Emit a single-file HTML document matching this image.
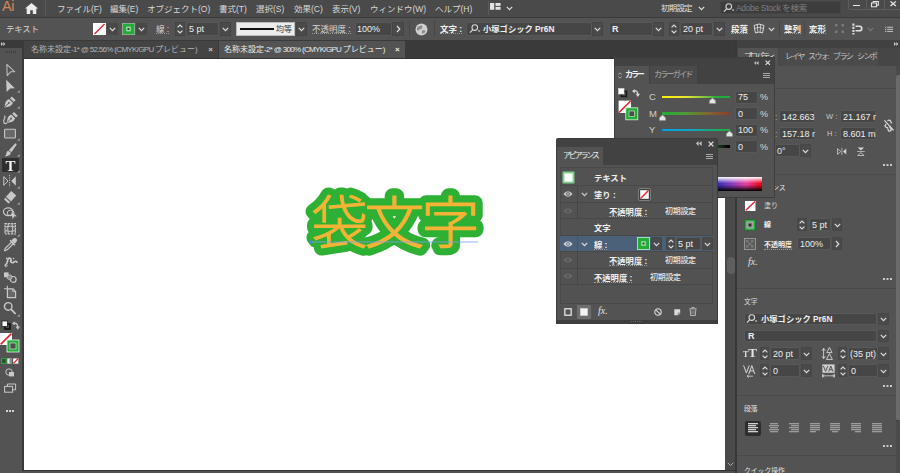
<!DOCTYPE html>
<html lang="ja">
<head>
<meta charset="utf-8">
<title>袋文字 - Illustrator</title>
<style>
*{box-sizing:border-box;margin:0;padding:0}
html,body{width:900px;height:473px;overflow:hidden;background:#3a3a3a}
body{position:relative;font-family:"Liberation Sans","Noto Sans CJK JP",sans-serif;font-size:8.5px;color:#d8d8d8;line-height:1}
.a{position:absolute}
.t{position:absolute;white-space:nowrap;line-height:10px;height:10px}
.b{font-weight:bold;color:#f0f0f0}
.lt{letter-spacing:-.68px}
.u{border-bottom:1px dotted #9a9a9a}
.fld{position:absolute;background:#464646;border:1px solid #585858;border-radius:2px}
.sep{position:absolute;width:1px;background:#444}
svg{position:absolute;overflow:visible}
.chev{fill:none;stroke:#dcdcdc;stroke-width:1.2}
</style>
</head>
<body>

<!-- ===== MENU BAR ===== -->
<div class="a" id="menubar" style="left:0;top:0;width:900px;height:17px;background:#4a4a4a"></div>
<div class="a" style="left:0;top:17px;width:900px;height:1px;background:#3a3a3a"></div>
<div class="t" style="left:2px;top:-2px;font-size:14.5px;line-height:17px;height:17px;color:#d08660;letter-spacing:-.3px">Ai</div>
<svg style="left:25px;top:3px" width="13" height="11" viewBox="0 0 13 11"><path d="M6.5 0 L13 5.6 L11.3 5.6 L11.3 11 L7.8 11 L7.8 7.2 L5.2 7.2 L5.2 11 L1.7 11 L1.7 5.6 L0 5.6 Z" fill="#ececec"/></svg>
<div class="sep" style="left:45px;top:1px;height:14px;background:#5a5a5a"></div>
<div class="t" style="left:57px;top:4px">ファイル(F)</div>
<div class="t" style="left:110px;top:4px">編集(E)</div>
<div class="t" style="left:147px;top:4px">オブジェクト(O)</div>
<div class="t" style="left:219px;top:4px">書式(T)</div>
<div class="t" style="left:256px;top:4px">選択(S)</div>
<div class="t" style="left:294px;top:4px">効果(C)</div>
<div class="t" style="left:332px;top:4px">表示(V)</div>
<div class="t" style="left:370px;top:4px">ウィンドウ(W)</div>
<div class="t" style="left:435px;top:4px">ヘルプ(H)</div>
<div class="sep" style="left:488px;top:1px;height:14px;background:#5a5a5a"></div>
<svg style="left:490px;top:3.3px" width="11" height="7.6" viewBox="0 0 13 9"><rect x="0" y="0" width="5" height="8" fill="#e4e4e4"/><rect x="6.5" y="0" width="6" height="3.4" fill="#e4e4e4"/><rect x="6.5" y="4.6" width="6" height="3.4" fill="#e4e4e4"/></svg>
<svg style="left:506px;top:5.5px" width="7" height="5" viewBox="0 0 7 5"><path class="chev" d="M0.8 0.8 L3.5 3.6 L6.2 0.8"/></svg>
<div class="t" style="left:661px;top:3px;color:#e0e0e0;letter-spacing:-.8px">初期設定</div>
<svg style="left:698px;top:6px" width="7" height="5" viewBox="0 0 7 5"><path class="chev" d="M0.8 0.8 L3.5 3.6 L6.2 0.8"/></svg>
<div class="a" style="left:720px;top:1px;width:121px;height:13px;background:#3d3d3d;border:1px solid #454545;border-radius:2px"></div>
<svg style="left:723px;top:2.5px" width="12" height="10" viewBox="0 0 12 10"><circle cx="5.8" cy="3.6" r="2.8" fill="none" stroke="#d8d8d8" stroke-width="1.1"/><path d="M3.8 5.6 L1 8.6" stroke="#d8d8d8" stroke-width="1.3"/><path d="M8.8 6.6 L11.4 6.6 L10.1 8.2 Z" fill="#d8d8d8"/></svg>
<div class="t" style="left:736px;top:2.5px;color:#7d7d7d;letter-spacing:-.35px">Adobe Stock を検索</div>
<div class="a" style="left:848px;top:-1px;width:53px;height:10.5px;border:1px solid #5c5c5c;border-radius:0 0 0 2px"></div>
<div class="a" style="left:865.5px;top:0;width:1px;height:9px;background:#5c5c5c"></div>
<div class="a" style="left:884px;top:0;width:1px;height:9px;background:#5c5c5c"></div>
<div class="a" style="left:853px;top:4.6px;width:7px;height:1.8px;background:#e6e6e6"></div>
<svg style="left:870.7px;top:1.2px" width="8" height="6.4" viewBox="0 0 12 11" preserveAspectRatio="none"><rect x="0.8" y="3.4" width="7.4" height="6.6" fill="none" stroke="#e6e6e6" stroke-width="1.7"/><path d="M3.4 3 V1 H11 V7.4 H8.4" fill="none" stroke="#e6e6e6" stroke-width="1.7"/></svg>
<svg style="left:890px;top:1px" width="6.4" height="5.4" viewBox="0 0 8 8" preserveAspectRatio="none"><path d="M0.6 0.6 L7.4 7.4 M7.4 0.6 L0.6 7.4" stroke="#e6e6e6" stroke-width="1.7"/></svg>

<!-- ===== CONTROL BAR ===== -->
<div class="a" id="ctrlbar" style="left:0;top:18px;width:900px;height:22px;background:#535353"></div>
<div class="t" style="left:6px;top:24px;font-size:8.3px">テキスト</div>
<!-- fill swatch -->
<svg style="left:93px;top:23px" width="13" height="12" viewBox="0 0 13 12"><rect width="13" height="12" fill="#fff"/><path d="M1.5 11 L11.5 1" stroke="#e8202a" stroke-width="1.4"/></svg>
<div class="a" style="left:107px;top:23px;width:11px;height:12px;background:#484848"></div>
<svg style="left:109px;top:27px" width="7" height="5" viewBox="0 0 7 5"><path class="chev" d="M0.8 0.8 L3.5 3.6 L6.2 0.8"/></svg>
<!-- stroke swatch -->
<svg style="left:122px;top:23px" width="13" height="12" viewBox="0 0 13 12"><rect x="0.4" y="0.4" width="12.2" height="11.2" fill="#22ac38" stroke="#9fb8a2" stroke-width="0.8"/><rect x="4.2" y="3.7" width="4.6" height="4.6" fill="#a5dcad"/><rect x="5.5" y="5" width="2" height="2" fill="#2f4a33"/></svg>
<div class="a" style="left:136px;top:23px;width:11px;height:12px;background:#484848"></div>
<svg style="left:138px;top:27px" width="7" height="5" viewBox="0 0 7 5"><path class="chev" d="M0.8 0.8 L3.5 3.6 L6.2 0.8"/></svg>
<div class="t u" style="left:156px;top:24px">線 :</div>
<div class="a" style="left:175px;top:22px;width:10px;height:14px;background:#4a4a4a;border:1px solid #444"></div>
<svg style="left:177px;top:24px" width="6" height="10" viewBox="0 0 6 10"><path class="chev" d="M0.6 3.4 L3 1 L5.4 3.4 M0.6 6.6 L3 9 L5.4 6.6"/></svg>
<div class="fld" style="left:186px;top:22px;width:33px;height:14px"></div>
<div class="t" style="left:189px;top:24px;font-size:9px;color:#eee">5 pt</div>
<div class="a" style="left:220px;top:22px;width:11px;height:14px;background:#4a4a4a;border:1px solid #444"></div>
<svg style="left:222px;top:27px" width="7" height="5" viewBox="0 0 7 5"><path class="chev" d="M0.8 0.8 L3.5 3.6 L6.2 0.8"/></svg>
<!-- stroke profile -->
<div class="a" style="left:236px;top:22px;width:59px;height:14px;background:#ececec;border:1px solid #bbb"></div>
<div class="a" style="left:240px;top:28px;width:34px;height:2px;background:#111"></div>
<div class="t" style="left:276px;top:25px;font-size:8px;color:#333">均等</div>
<div class="a" style="left:296px;top:22px;width:11px;height:14px;background:#4a4a4a;border:1px solid #444"></div>
<svg style="left:298px;top:27px" width="7" height="5" viewBox="0 0 7 5"><path class="chev" d="M0.8 0.8 L3.5 3.6 L6.2 0.8"/></svg>
<div class="t u" style="left:312px;top:24px">不透明度 :</div>
<div class="fld" style="left:355px;top:22px;width:37px;height:14px"></div>
<div class="t" style="left:357px;top:24px;font-size:9px;color:#eee">100%</div>
<div class="a" style="left:392px;top:22px;width:12px;height:14px;background:#4a4a4a;border:1px solid #444"></div>
<svg style="left:396px;top:25px" width="5" height="8" viewBox="0 0 5 8"><path class="chev" d="M1 1 L3.8 4 L1 7"/></svg>
<div class="sep" style="left:409px;top:21px;height:16px;background:#474747"></div>
<svg style="left:415px;top:23px" width="13" height="13" viewBox="0 0 13 13"><circle cx="6.5" cy="6.5" r="6" fill="#cfcfcf"/><path d="M2 5 Q4 2 7 2.5 Q8 5 6 6 Q4 6 3 8 Q1.5 7 2 5Z M7 7.5 Q10 6.5 10.5 8.5 Q9 11 7 10.5Z" fill="#8a8a8a"/></svg>
<div class="sep" style="left:434px;top:21px;height:16px;background:#474747"></div>
<div class="t u b" style="left:440px;top:24px">文字 :</div>
<div class="fld" style="left:466px;top:22px;width:126px;height:14px"></div>
<svg style="left:469px;top:24px" width="12" height="10" viewBox="0 0 12 10"><circle cx="5.8" cy="3.6" r="2.8" fill="none" stroke="#d8d8d8" stroke-width="1.1"/><path d="M3.8 5.6 L1 8.6" stroke="#d8d8d8" stroke-width="1.3"/><path d="M8.8 6.6 L11.4 6.6 L10.1 8.2 Z" fill="#d8d8d8"/></svg>
<div class="t b" style="left:483px;top:24px;font-size:8.3px">小塚ゴシック Pr6N</div>
<div class="a" style="left:592px;top:22px;width:11px;height:14px;background:#4a4a4a;border:1px solid #444"></div>
<svg style="left:594px;top:27px" width="7" height="5" viewBox="0 0 7 5"><path class="chev" d="M0.8 0.8 L3.5 3.6 L6.2 0.8"/></svg>
<div class="fld" style="left:609px;top:22px;width:44px;height:14px"></div>
<div class="t b" style="left:612px;top:24px;font-size:9px">R</div>
<div class="a" style="left:653px;top:22px;width:11px;height:14px;background:#4a4a4a;border:1px solid #444"></div>
<svg style="left:655px;top:27px" width="7" height="5" viewBox="0 0 7 5"><path class="chev" d="M0.8 0.8 L3.5 3.6 L6.2 0.8"/></svg>
<div class="a" style="left:669px;top:22px;width:10px;height:14px;background:#4a4a4a;border:1px solid #444"></div>
<svg style="left:671px;top:24px" width="6" height="10" viewBox="0 0 6 10"><path class="chev" d="M0.6 3.4 L3 1 L5.4 3.4 M0.6 6.6 L3 9 L5.4 6.6"/></svg>
<div class="fld" style="left:680px;top:22px;width:33px;height:14px"></div>
<div class="t" style="left:683px;top:24px;font-size:9px;color:#eee">20 pt</div>
<div class="a" style="left:714px;top:22px;width:11px;height:14px;background:#4a4a4a;border:1px solid #444"></div>
<svg style="left:716px;top:27px" width="7" height="5" viewBox="0 0 7 5"><path class="chev" d="M0.8 0.8 L3.5 3.6 L6.2 0.8"/></svg>
<div class="t u b" style="left:731px;top:24px">段落</div>
<svg style="left:753px;top:23px" width="12" height="11" viewBox="0 0 12 11"><path d="M1 2.5 Q6 -0.5 11 2.5 L9.5 10 Q6 8 2.5 10 Z" fill="none" stroke="#d8d8d8" stroke-width="1"/><path d="M4.3 1.3 L4.8 8.8 M7.7 1.3 L7.2 8.8 M1.6 5.5 Q6 3 10.4 5.5" fill="none" stroke="#d8d8d8" stroke-width="0.8"/></svg>
<svg style="left:768px;top:27px" width="7" height="5" viewBox="0 0 7 5"><path class="chev" d="M0.8 0.8 L3.5 3.6 L6.2 0.8"/></svg>
<div class="sep" style="left:779px;top:21px;height:16px;background:#474747"></div>
<div class="t u b" style="left:784px;top:24px">整列</div>
<div class="sep" style="left:804px;top:21px;height:16px;background:#474747"></div>
<div class="t u b" style="left:809px;top:24px">変形</div>
<svg style="left:835px;top:24px" width="10" height="10" viewBox="0 0 10 10"><g fill="#7a7a7a"><rect x="0" y="0" width="2.5" height="2.5"/><rect x="6.5" y="0" width="2.5" height="2.5"/><rect x="0" y="6.5" width="2.5" height="2.5"/><rect x="6.5" y="6.5" width="2.5" height="2.5"/></g></svg>
<svg style="left:852px;top:23px" width="12" height="12" viewBox="0 0 12 12"><path d="M1.4 0.5 V11.5" stroke="#e0e0e0" stroke-width="2" stroke-dasharray="2.2 1"/><path d="M3.5 3.2 H7.5 A2.3 2.3 0 0 1 7.5 7.8 H3.5" fill="none" stroke="#e0e0e0" stroke-width="1.6"/></svg>
<svg style="left:867px;top:27px" width="7" height="5" viewBox="0 0 7 5"><path d="M0.8 0.8 L3.5 3.6 L6.2 0.8" fill="none" stroke="#7a7a7a" stroke-width="1.1"/></svg>
<svg style="left:884.5px;top:25.5px" width="8.5" height="7" viewBox="0 0 11 10" preserveAspectRatio="none"><g fill="#b8b8b8"><rect x="0" y="1" width="1.6" height="1.6"/><rect x="0" y="4" width="1.6" height="1.6"/><rect x="0" y="7" width="1.6" height="1.6"/><rect x="2.8" y="1" width="7.6" height="1.6"/><rect x="2.8" y="4" width="7.6" height="1.6"/><rect x="2.8" y="7" width="7.6" height="1.6"/></g></svg>

<!-- ===== TAB BAR ===== -->
<div class="a" id="tabbar" style="left:0;top:40px;width:900px;height:19px;background:#3a3a3a"></div>
<div class="a" style="left:24px;top:41px;width:194px;height:18px;background:#444"></div>
<div class="t" style="left:31px;top:45px;font-size:8px;color:#b4b4b4">名称未設定<span class="lt">-1* @ 52.56% (CMYK/GPU </span>プレビュー<span class="lt">)</span></div>
<div class="t" style="left:208.3px;top:45px;font-size:8px;color:#ccc;font-weight:bold">×</div>
<div class="a" style="left:219px;top:41px;width:186px;height:18px;background:#535353"></div>
<div class="t" style="left:224px;top:45px;font-size:8px;color:#ececec">名称未設定<span class="lt">-2* @ 300% (CMYK/GPU </span>プレビュー<span class="lt">)</span></div>
<div class="t" style="left:395px;top:45px;font-size:8px;color:#eee;font-weight:bold">×</div>
<div class="a" style="left:24px;top:58px;width:590px;height:1px;background:#333"></div>
<svg style="left:1px;top:42.3px" width="4.6" height="4" viewBox="0 0 6 5"><path d="M0 0 L2.6 2.5 L0 5Z M3 0 L5.6 2.5 L3 5Z" fill="#d0d0d0"/></svg>

<!-- ===== CANVAS ===== -->
<div class="a" id="canvas" style="left:24px;top:59px;width:701px;height:411px;background:#fff"></div>
<div class="a" style="left:22px;top:48px;width:2px;height:425px;background:#3a3a3a"></div>
<div class="a" style="left:22px;top:470px;width:715px;height:3px;background:linear-gradient(#333 0 1px,#505050 1px)"></div>
<div class="a" style="left:725px;top:59px;width:10px;height:411px;background:#4a4a4a"></div>
<div class="a" style="left:726.5px;top:257px;width:8.5px;height:17px;background:#5f5f5f;border-radius:4px"></div>
<svg style="left:727px;top:462px" width="7" height="5" viewBox="0 0 7 5"><path d="M0.8 0.8 L3.5 3.6 L6.2 0.8" fill="none" stroke="#aaa" stroke-width="1"/></svg>
<!-- artwork -->
<svg style="left:280px;top:160px" width="220" height="120" viewBox="0 0 220 120">
<g font-family="'Liberation Sans','Noto Sans CJK JP',sans-serif" font-size="56" font-weight="300">
<text y="82.7" fill="#2db034" stroke="#2db034" stroke-width="15.4" stroke-linejoin="round" stroke-linecap="round"><tspan x="31.4" font-size="56.5">袋</tspan><tspan x="84.5" textLength="60" lengthAdjust="spacingAndGlyphs">文</tspan><tspan x="141.2" textLength="58.5" lengthAdjust="spacingAndGlyphs">字</tspan></text>
<text y="82.7" fill="#f5b335" stroke="#f5b335" stroke-width="1.1"><tspan x="31.4" font-size="56.5">袋</tspan><tspan x="84.5" textLength="60" lengthAdjust="spacingAndGlyphs">文</tspan><tspan x="141.2" textLength="58.5" lengthAdjust="spacingAndGlyphs">字</tspan></text>
</g>
<path d="M30 82 H198" stroke="#7f9cf5" stroke-width="0.8"/>
<rect x="29" y="80.5" width="3" height="3" fill="#4d7df0"/>
</svg>

<!-- ===== TOOLBAR ===== -->
<div class="a" id="toolbar" style="left:0;top:48px;width:22px;height:425px;background:#535353"></div>
<div class="a" style="left:5px;top:51px;width:12px;height:2px;background:repeating-linear-gradient(90deg,#3e3e3e 0 1px,#535353 1px 2px)"></div>
<svg style="left:2px;top:61.5px" width="16" height="16" viewBox="0 0 16 16"><path d="M4.8 2.4 L12.6 9.6 L8.6 9.8 L5.2 13.6 Z" fill="none" stroke="#bcbcbc" stroke-width="1.1" stroke-linejoin="round"/></svg>
<svg style="left:2px;top:77.5px" width="16" height="16" viewBox="0 0 16 16"><path d="M4.2 1.8 L12.8 10.2 L8.2 10.4 L4.6 14 Z" fill="#c8c8c8"/></svg>
<svg style="left:17px;top:90px" width="3" height="3" viewBox="0 0 3 3"><path d="M2.6 0.2 V2.6 H0.2Z" fill="#b8b8b8"/></svg>
<svg style="left:2px;top:93.5px" width="16" height="16" viewBox="0 0 16 16"><g transform="translate(0,0)"><path d="M2.4 13.4 L3.4 8.6 Q4.2 6.4 7 5 L11 9 Q9.6 11.8 7.4 12.4 Z" fill="#c8c8c8"/><path d="M8 4.2 L9.8 2.4 L13.6 6.2 L11.8 8 Z" fill="#c8c8c8"/><path d="M2.8 13 L6.6 9.2" stroke="#535353" stroke-width="0.9"/><circle cx="6.9" cy="8.9" r="0.9" fill="#535353"/></g></svg>
<svg style="left:17px;top:106px" width="3" height="3" viewBox="0 0 3 3"><path d="M2.6 0.2 V2.6 H0.2Z" fill="#b8b8b8"/></svg>
<svg style="left:2px;top:109.5px" width="16" height="16" viewBox="0 0 16 16"><g transform="translate(2.2,-0.4)"><path d="M2.4 13.4 L3.4 8.6 Q4.2 6.4 7 5 L11 9 Q9.6 11.8 7.4 12.4 Z" fill="#c8c8c8"/><path d="M8 4.2 L9.8 2.4 L13.6 6.2 L11.8 8 Z" fill="#c8c8c8"/><path d="M2.8 13 L6.6 9.2" stroke="#535353" stroke-width="0.9"/><circle cx="6.9" cy="8.9" r="0.9" fill="#535353"/></g><path d="M5 12.8 Q2.6 14.6 1.8 12.2 Q1.4 10 2.6 8.4 Q3.6 6.8 2.4 5.6" fill="none" stroke="#c8c8c8" stroke-width="1.2"/></svg>
<svg style="left:2px;top:125.5px" width="16" height="16" viewBox="0 0 16 16"><rect x="2.6" y="3.2" width="10.8" height="8.8" rx="0.8" fill="#686868" stroke="#c8c8c8" stroke-width="1.1"/></svg>
<svg style="left:17px;top:138px" width="3" height="3" viewBox="0 0 3 3"><path d="M2.6 0.2 V2.6 H0.2Z" fill="#b8b8b8"/></svg>
<svg style="left:2px;top:141.5px" width="16" height="16" viewBox="0 0 16 16"><path d="M13.4 1.2 Q14.8 1.4 14.6 2.8 L9.4 10.2 L6.8 8.2 Z" fill="#c8c8c8"/><path d="M6.2 8.8 L8.8 10.8 Q8.6 14 2.8 14.4 Q4.6 12.8 4.4 11 Q4.6 9.2 6.2 8.8Z" fill="#c8c8c8"/></svg>
<svg style="left:17px;top:154px" width="3" height="3" viewBox="0 0 3 3"><path d="M2.6 0.2 V2.6 H0.2Z" fill="#b8b8b8"/></svg>
<div class="a" style="left:1.5px;top:158px;width:17.5px;height:14px;background:#2e2e2e;border-radius:1px"></div>
<div class="t" style="left:4px;top:157.5px;width:13px;text-align:center;font-family:'Liberation Serif',serif;font-weight:bold;font-size:15px;line-height:16px;height:16px;color:#f2f2f2;will-change:transform">T</div>
<svg style="left:17px;top:169.5px" width="3" height="3" viewBox="0 0 3 3"><path d="M2.6 0.2 V2.6 H0.2Z" fill="#b8b8b8"/></svg>
<svg style="left:2px;top:173px" width="16" height="16" viewBox="0 0 16 16"><path d="M1.8 3.6 L6 8 L1.8 12.4 Z" fill="none" stroke="#c8c8c8" stroke-width="1"/><path d="M13.8 3.2 L9.2 8 L13.8 12.8 Z" fill="#c8c8c8"/><path d="M7.6 1.8 V14.2" stroke="#c8c8c8" stroke-width="0.9" stroke-dasharray="1.4 1"/></svg>
<svg style="left:17px;top:185.5px" width="3" height="3" viewBox="0 0 3 3"><path d="M2.6 0.2 V2.6 H0.2Z" fill="#b8b8b8"/></svg>
<svg style="left:2px;top:189px" width="16" height="16" viewBox="0 0 16 16"><path d="M9.2 2 L14.2 6.6 L9 12.4 L4 7.8 Z" fill="#c8c8c8"/><path d="M3.2 8.6 L8.2 13.2 L6.4 14.4 L2.2 10.6 Z" fill="#c8c8c8"/></svg>
<svg style="left:17px;top:201.5px" width="3" height="3" viewBox="0 0 3 3"><path d="M2.6 0.2 V2.6 H0.2Z" fill="#b8b8b8"/></svg>
<svg style="left:2px;top:205px" width="16" height="16" viewBox="0 0 16 16"><ellipse cx="6.2" cy="6.8" rx="4.8" ry="3.9" fill="none" stroke="#c8c8c8" stroke-width="1.2"/><ellipse cx="8.6" cy="8" rx="3.4" ry="2.8" fill="none" stroke="#c8c8c8" stroke-width="1"/><path d="M9.4 6.8 L15 11.2 L12.2 11.6 L10.6 14.2 Z" fill="#c8c8c8"/></svg>
<svg style="left:2px;top:221px" width="16" height="16" viewBox="0 0 16 16"><rect x="3" y="2.6" width="10.4" height="10.4" fill="#5c5c5c" stroke="#c8c8c8" stroke-width="1.2" stroke-dasharray="2.2 0.7"/><path d="M3 6 Q8 4.4 13.4 6 M3 9.6 Q8 11.2 13.4 9.6 M6.4 2.6 Q5 7.8 6.4 13 M10 2.6 Q11.4 7.8 10 13" fill="none" stroke="#c8c8c8" stroke-width="1"/></svg>
<svg style="left:17px;top:233.5px" width="3" height="3" viewBox="0 0 3 3"><path d="M2.6 0.2 V2.6 H0.2Z" fill="#b8b8b8"/></svg>
<svg style="left:2px;top:237px" width="16" height="16" viewBox="0 0 16 16"><path d="M11.2 1.6 Q13.2 0.4 14.6 1.8 Q15.8 3.2 14.4 5 L12.6 6.8 L9.4 3.6 Z" fill="#c8c8c8"/><path d="M9.4 5.2 L11.2 7 L5.6 12.6 L3 13.8 L2.4 13.2 L3.6 10.8 Z" fill="#6a6a6a" stroke="#c8c8c8" stroke-width="1.1"/><path d="M8 3.2 L13 8.2" stroke="#c8c8c8" stroke-width="1.5"/></svg>
<svg style="left:2px;top:253px" width="16" height="16" viewBox="0 0 16 16"><path d="M3.2 12.4 Q5 10.8 5.6 7.8 Q6 4.4 8 5.2 Q9.8 6.2 8.6 8.6 Q10 10.6 12 9 Q13.6 7.4 15 9.2" fill="none" stroke="#c8c8c8" stroke-width="1.7" stroke-linecap="round"/><circle cx="4.6" cy="5.4" r="0.8" fill="#c8c8c8"/><circle cx="11.6" cy="5.6" r="0.8" fill="#c8c8c8"/><path d="M3 14 L6 12.6" stroke="#c8c8c8" stroke-width="0.8"/></svg>
<svg style="left:2px;top:269px" width="16" height="16" viewBox="0 0 16 16"><rect x="2" y="3.4" width="4.6" height="4.8" fill="#c8c8c8"/><circle cx="11.2" cy="10.4" r="2.9" fill="none" stroke="#c8c8c8" stroke-width="1.2"/><circle cx="7.6" cy="8.2" r="2.4" fill="#8c8c8c" stroke="#c8c8c8" stroke-width="0.8"/></svg>
<svg style="left:2px;top:285px" width="16" height="16" viewBox="0 0 16 16"><path d="M5.4 3.8 H11 L13.6 6.4 V12.6 H5.4 Z" fill="#686868" stroke="#c8c8c8" stroke-width="1.2"/><path d="M10.8 4 V6.6 H13.4" fill="none" stroke="#c8c8c8" stroke-width="0.9"/><path d="M5.4 0.8 V3.8 M2 3.8 H5.4" stroke="#c8c8c8" stroke-width="1.1"/></svg>
<svg style="left:2px;top:301px" width="16" height="16" viewBox="0 0 16 16"><circle cx="6.2" cy="5.4" r="3.8" fill="none" stroke="#c8c8c8" stroke-width="1.4"/><path d="M9 8.2 L13.6 13" stroke="#c8c8c8" stroke-width="1.8"/></svg>
<svg style="left:17px;top:313.5px" width="3" height="3" viewBox="0 0 3 3"><path d="M2.6 0.2 V2.6 H0.2Z" fill="#b8b8b8"/></svg>
<svg style="left:1px;top:320px" width="20" height="11" viewBox="0 0 20 11"><rect x="4" y="4" width="5" height="5" fill="none" stroke="#111" stroke-width="1.6"/><rect x="1" y="1" width="5.4" height="5.4" fill="#fff" stroke="#222" stroke-width="0.8"/><path d="M12.4 3.4 Q16.6 2 16.8 7.4" fill="none" stroke="#c8c8c8" stroke-width="1.3"/><path d="M11 3.6 L13.8 1.4 L13.8 5.6Z M14.6 6.6 L19 6.6 L16.8 9.8Z" fill="#c8c8c8"/></svg>
<svg style="left:0.3px;top:333px" width="20" height="19" viewBox="0 0 20 19"><rect x="0" y="0" width="12" height="12" fill="#fff"/><path d="M0.6 11.4 L11.4 0.6" stroke="#e8202a" stroke-width="1.5"/><rect x="7" y="7" width="12" height="12" fill="#22ac38" stroke="#e6f5e8" stroke-width="0.8"/><rect x="10" y="10" width="6" height="6" fill="#4c4c4c" stroke="#cfe8d2" stroke-width="0.7"/></svg>
<svg style="left:1px;top:357.5px" width="18" height="6.6" viewBox="0 0 19 8" preserveAspectRatio="none"><rect x="0.7" y="0.7" width="4.6" height="6" fill="#2c4a30" stroke="#22ac38" stroke-width="1.2"/><rect x="6.6" y="0.5" width="5" height="6.4" fill="#e8e8e8"/><rect x="9" y="0.5" width="2.6" height="6.4" fill="#8a8a8a"/><rect x="12.8" y="0.5" width="5.6" height="6.4" fill="#fff"/><path d="M13.2 6.6 L18 0.8" stroke="#e8202a" stroke-width="1.4"/></svg>
<svg style="left:2px;top:365px" width="16" height="16" viewBox="0 0 16 16"><circle cx="7" cy="7" r="3.2" fill="none" stroke="#c8c8c8" stroke-width="1"/><rect x="7" y="7" width="5" height="4.4" fill="#c8c8c8"/></svg>
<svg style="left:2px;top:381px" width="16" height="16" viewBox="0 0 16 16"><rect x="2.6" y="5.4" width="8" height="5.8" fill="#535353" stroke="#c8c8c8" stroke-width="1"/><path d="M5.4 5.2 V3 H13.6 V8.8 H10.8" fill="none" stroke="#c8c8c8" stroke-width="1"/></svg>
<div class="a" style="left:6px;top:410px;width:2px;height:2px;background:#d2d2d2;box-shadow:3px 0 #d2d2d2,6px 0 #d2d2d2"></div>

<!-- ===== RIGHT DOCK ===== -->
<div class="a" style="left:735px;top:40px;width:2px;height:433px;background:#383838"></div>
<div class="a" style="left:737px;top:40px;width:163px;height:8px;background:#414141"></div>
<svg style="left:894px;top:42.3px" width="4.6" height="4" viewBox="0 0 6 5"><path d="M0 0 L2.6 2.5 L0 5Z M3 0 L5.6 2.5 L3 5Z" fill="#d0d0d0"/></svg>
<div class="a" style="left:737px;top:48px;width:163px;height:18px;background:#464646"></div>
<div class="a" style="left:737.5px;top:48px;width:40.5px;height:18px;background:#535353"></div>
<div class="t" style="left:744px;top:52px;font-size:8px;color:#e4e4e4;letter-spacing:-1.9px">プロパティ</div>
<div class="a" style="left:779px;top:48px;width:24px;height:18px;background:#4b4b4b"></div>
<div class="a" style="left:804px;top:48px;width:23.5px;height:18px;background:#4b4b4b"></div>
<div class="a" style="left:828.5px;top:48px;width:22.5px;height:18px;background:#4b4b4b"></div>
<div class="a" style="left:852px;top:48px;width:25.5px;height:18px;background:#4b4b4b"></div>
<div class="t" style="left:785px;top:52px;font-size:8px;color:#c2c2c2;letter-spacing:-1.6px">レイヤ</div>
<div class="t" style="left:808px;top:52px;font-size:8px;color:#c2c2c2;letter-spacing:-1.6px">スウォ:</div>
<div class="t" style="left:833px;top:52px;font-size:8px;color:#c2c2c2;letter-spacing:-1.6px">ブラシ</div>
<div class="t" style="left:857px;top:52px;font-size:8px;color:#c2c2c2;letter-spacing:-1.6px">シンボ</div>
<div class="a" id="dockbody" style="left:737px;top:66px;width:163px;height:407px;background:#535353"></div>
<div class="a" style="left:896px;top:66px;width:4px;height:9px;background:#4a4a4a"></div>
<div class="a" style="left:896px;top:75px;width:4px;height:345px;background:#6a6a6a;border-radius:2px 0 0 2px"></div>
<div class="a" style="left:896px;top:420px;width:4px;height:53px;background:#4a4a4a"></div>
<div class="a" style="left:737px;top:88px;width:159px;height:1px;background:#4a4a4a"></div>
<div class="a" style="left:737px;top:174px;width:159px;height:1px;background:#4a4a4a"></div>
<div class="a" style="left:737px;top:288px;width:159px;height:1px;background:#4a4a4a"></div>
<div class="a" style="left:737px;top:395px;width:159px;height:1px;background:#4a4a4a"></div>
<div class="a" style="left:737px;top:455px;width:159px;height:1px;background:#4a4a4a"></div>
<div class="t" style="left:775px;top:112px;color:#aaa">:</div><div class="t" style="left:775px;top:129px;color:#aaa">:</div>
<div class="fld" style="left:779px;top:110px;width:36px;height:13px"></div>
<div class="fld" style="left:779px;top:127px;width:36px;height:13px"></div>
<div class="fld" style="left:840px;top:110px;width:36px;height:13px"></div>
<div class="fld" style="left:840px;top:127px;width:36px;height:13px"></div>
<div class="t" style="left:782px;top:112px;font-size:9px;color:#efefef">142.663</div>
<div class="t" style="left:782px;top:129px;font-size:9px;color:#efefef">157.18 r</div>
<div class="t" style="left:843px;top:112px;font-size:9px;color:#efefef">21.167 r</div>
<div class="t" style="left:843px;top:129px;font-size:9px;color:#efefef">8.601 m</div>
<div class="t" style="left:826px;top:112px;font-size:7.5px;color:#c8c8c8">W :</div>
<div class="t" style="left:827px;top:129px;font-size:7.5px;color:#c8c8c8">H :</div>
<svg style="left:883px;top:119px" width="12" height="13" viewBox="0 0 12 13"><path d="M4.4 1.6 Q6.6 0.4 7.6 2.2 L8.6 4.4 M3 5 L2 7 Q3.4 9.4 5.2 8.6 M6.6 7.4 L8.4 10.6 Q7.6 12.6 5.6 11.8 L4.6 9.8" fill="none" stroke="#dadada" stroke-width="1.3"/><path d="M1.4 1.4 L10.6 11.4" stroke="#dadada" stroke-width="1.2"/></svg>
<div class="fld" style="left:775px;top:144px;width:25px;height:13px"></div>
<div class="a" style="left:800px;top:144px;width:11px;height:13px;background:#4a4a4a;border:1px solid #464646;border-radius:1px"></div>
<svg style="left:802px;top:149px" width="7" height="5" viewBox="0 0 7 5"><path d="M0.8 0.8 L3.5 3.6 L6.2 0.8" fill="none" stroke="#dcdcdc" stroke-width="1.2"/></svg>
<div class="t" style="left:777px;top:146px;font-size:9px;color:#e6e6e6">0°</div>
<svg style="left:836.5px;top:148.2px" width="9.8" height="7" viewBox="0 0 11 9" preserveAspectRatio="none"><path d="M0.6 0.8 L4.2 4.5 L0.6 8.2Z" fill="none" stroke="#d6d6d6" stroke-width="0.9"/><path d="M10.4 0.8 L6.8 4.5 L10.4 8.2Z" fill="#d6d6d6"/><path d="M5.5 0 V9" stroke="#d6d6d6" stroke-width="0.8"/></svg>
<svg style="left:857px;top:147px" width="7.8" height="9" viewBox="0 0 9 11" preserveAspectRatio="none"><path d="M0.8 0.6 L4.5 4.2 L8.2 0.6Z" fill="#d6d6d6"/><path d="M0.8 10.4 L4.5 6.8 L8.2 10.4Z" fill="none" stroke="#d6d6d6" stroke-width="0.9"/><path d="M0 5.5 H9" stroke="#d6d6d6" stroke-width="0.8"/></svg>
<div class="a" style="left:883px;top:164px;width:2px;height:2px;background:#c8c8c8;box-shadow:3.5px 0 #c8c8c8,7px 0 #c8c8c8"></div>
<div class="t" style="left:744px;top:183px;font-size:7px;color:#e0e0e0">アピアランス</div>
<svg style="left:744.5px;top:201px" width="10.5" height="10" viewBox="0 0 11 11" preserveAspectRatio="none"><rect width="11" height="11" fill="#fff"/><path d="M0.6 10.4 L10.4 0.6" stroke="#e8202a" stroke-width="1.4"/></svg>
<div class="t" style="left:764px;top:201px;font-size:7px">塗り</div>
<svg style="left:744px;top:219px" width="12" height="12" viewBox="0 0 12 12"><rect x="0.3" y="0.3" width="11.4" height="11.4" rx="1" fill="#3e3e3e"/><rect x="1.6" y="1.6" width="8.8" height="8.8" fill="#808080" stroke="#22ac38" stroke-width="1.8"/><rect x="3" y="3" width="6" height="6" fill="none" stroke="#cfe9d2" stroke-width="0.6"/><rect x="4.8" y="4.8" width="2.4" height="2.4" fill="#2c2c2c"/></svg>
<div class="t b" style="left:764px;top:220px;font-size:7px">線</div>
<div class="a" style="left:797px;top:218px;width:10px;height:13px;background:#4a4a4a;border:1px solid #464646;border-radius:1px"></div>
<svg style="left:799px;top:220px" width="6" height="10" viewBox="0 0 6 10"><path class="chev" d="M0.6 3.4 L3 1 L5.4 3.4 M0.6 6.6 L3 9 L5.4 6.6"/></svg>
<div class="fld" style="left:809px;top:218px;width:22px;height:13px"></div>
<div class="a" style="left:832px;top:218px;width:10px;height:13px;background:#4a4a4a;border:1px solid #464646;border-radius:1px"></div>
<svg style="left:833.5px;top:223px" width="7" height="5" viewBox="0 0 7 5"><path d="M0.8 0.8 L3.5 3.6 L6.2 0.8" fill="none" stroke="#dcdcdc" stroke-width="1.2"/></svg>
<div class="t" style="left:812px;top:220px;font-size:9px;color:#efefef">5 pt</div>
<svg style="left:744px;top:238px" width="12" height="12" viewBox="0 0 12 12"><rect x="0.5" y="0.5" width="11" height="11" fill="#5a5a5a" stroke="#a4a4a4" stroke-width="0.8"/><g fill="#777"><rect x="2" y="2" width="2.6" height="2.6"/><rect x="7" y="2" width="2.6" height="2.6"/><rect x="4.6" y="4.6" width="2.6" height="2.6"/><rect x="2" y="7" width="2.6" height="2.6"/><rect x="7" y="7" width="2.6" height="2.6"/></g></svg>
<div class="t b u" style="left:764px;top:240px;font-size:7px">不透明度</div>
<div class="fld" style="left:797px;top:237px;width:34px;height:13px"></div>
<div class="a" style="left:832px;top:237px;width:10px;height:13px;background:#4a4a4a;border:1px solid #464646;border-radius:1px"></div>
<svg style="left:835px;top:240px" width="5" height="8" viewBox="0 0 5 8"><path class="chev" d="M1 1 L3.8 4 L1 7"/></svg>
<div class="t" style="left:800px;top:239px;font-size:9px;color:#efefef">100%</div>
<div class="t" style="left:748px;top:257px;font-size:10px;font-style:italic;font-family:'Liberation Serif',serif;color:#e0e0e0">fx.</div>
<div class="a" style="left:883px;top:278px;width:2px;height:2px;background:#c8c8c8;box-shadow:3.5px 0 #c8c8c8,7px 0 #c8c8c8"></div>
<div class="t" style="left:744px;top:296.5px;font-size:6.8px">文字</div>
<div class="fld" style="left:744px;top:313px;width:133px;height:12px"></div>
<div class="a" style="left:878px;top:313px;width:11px;height:12px;background:#4a4a4a;border:1px solid #464646;border-radius:1px"></div>
<svg style="left:880px;top:317px" width="7" height="5" viewBox="0 0 7 5"><path d="M0.8 0.8 L3.5 3.6 L6.2 0.8" fill="none" stroke="#dcdcdc" stroke-width="1.2"/></svg>
<svg style="left:746px;top:314px" width="12" height="10" viewBox="0 0 12 10"><circle cx="5.8" cy="3.6" r="2.8" fill="none" stroke="#d8d8d8" stroke-width="1.1"/><path d="M3.8 5.6 L1 8.6" stroke="#d8d8d8" stroke-width="1.3"/><path d="M8.8 6.6 L11.4 6.6 L10.1 8.2 Z" fill="#d8d8d8"/></svg>
<div class="t b" style="left:761px;top:314px;font-size:8.3px">小塚ゴシック Pr6N</div>
<div class="fld" style="left:744px;top:330px;width:133px;height:12px"></div>
<div class="a" style="left:878px;top:330px;width:11px;height:12px;background:#4a4a4a;border:1px solid #464646;border-radius:1px"></div>
<svg style="left:880px;top:334px" width="7" height="5" viewBox="0 0 7 5"><path d="M0.8 0.8 L3.5 3.6 L6.2 0.8" fill="none" stroke="#dcdcdc" stroke-width="1.2"/></svg>
<div class="t b" style="left:748px;top:331px;font-size:9px">R</div>
<div class="t" style="left:743px;top:346px;font-family:'Liberation Serif',serif;font-weight:bold;color:#e2e2e2;font-size:13px;line-height:14px;height:14px;will-change:transform"><span style="font-size:8px">T</span>T</div>
<div class="a" style="left:760px;top:347px;width:9px;height:13px;background:#4a4a4a;border:1px solid #464646;border-radius:1px"></div>
<svg style="left:761.5px;top:348.5px" width="6" height="10" viewBox="0 0 6 10"><path class="chev" d="M0.6 3.4 L3 1 L5.4 3.4 M0.6 6.6 L3 9 L5.4 6.6"/></svg>
<div class="fld" style="left:770px;top:347px;width:30px;height:13px"></div>
<div class="a" style="left:801px;top:347px;width:11px;height:13px;background:#4a4a4a;border:1px solid #464646;border-radius:1px"></div>
<svg style="left:803px;top:352px" width="7" height="5" viewBox="0 0 7 5"><path d="M0.8 0.8 L3.5 3.6 L6.2 0.8" fill="none" stroke="#dcdcdc" stroke-width="1.2"/></svg>
<div class="t" style="left:773px;top:349px;font-size:9px;color:#efefef">20 pt</div>
<svg style="left:822px;top:347px" width="12" height="13" viewBox="0 0 12 13"><path d="M7.4 0.4 L4.8 5.6 H10 Z M7.4 6.6 L4.4 12.4 H10.4 Z" fill="none" stroke="#d6d6d6" stroke-width="0.9"/><path d="M1.6 1.6 V11.4 M0 3.6 L1.6 1.4 L3.2 3.6 M0 9.4 L1.6 11.6 L3.2 9.4" fill="none" stroke="#d6d6d6" stroke-width="0.9"/></svg>
<div class="a" style="left:838px;top:347px;width:9px;height:13px;background:#4a4a4a;border:1px solid #464646;border-radius:1px"></div>
<svg style="left:839.5px;top:348.5px" width="6" height="10" viewBox="0 0 6 10"><path class="chev" d="M0.6 3.4 L3 1 L5.4 3.4 M0.6 6.6 L3 9 L5.4 6.6"/></svg>
<div class="fld" style="left:848px;top:347px;width:30px;height:13px"></div>
<div class="a" style="left:878px;top:347px;width:11px;height:13px;background:#4a4a4a;border:1px solid #464646;border-radius:1px"></div>
<svg style="left:880px;top:352px" width="7" height="5" viewBox="0 0 7 5"><path d="M0.8 0.8 L3.5 3.6 L6.2 0.8" fill="none" stroke="#dcdcdc" stroke-width="1.2"/></svg>
<div class="t" style="left:850px;top:349px;font-size:9px;color:#efefef">(35 pt)</div>
<svg style="left:743px;top:364px" width="14" height="14" viewBox="0 0 14 14"><path d="M0.6 1.4 L3.4 9 L6.2 1.4 M5.8 10 L8.8 1.6 L11.8 10 M7 7 H10.6" fill="none" stroke="#d6d6d6" stroke-width="1"/><path d="M4 12.2 H10 M4 12.2 L5.8 10.8 M4 12.2 L5.8 13.6" fill="none" stroke="#d6d6d6" stroke-width="0.8"/></svg>
<div class="a" style="left:760px;top:364px;width:9px;height:13px;background:#4a4a4a;border:1px solid #464646;border-radius:1px"></div>
<svg style="left:761.5px;top:365.5px" width="6" height="10" viewBox="0 0 6 10"><path class="chev" d="M0.6 3.4 L3 1 L5.4 3.4 M0.6 6.6 L3 9 L5.4 6.6"/></svg>
<div class="fld" style="left:770px;top:364px;width:30px;height:13px"></div>
<div class="a" style="left:801px;top:364px;width:11px;height:13px;background:#4a4a4a;border:1px solid #464646;border-radius:1px"></div>
<svg style="left:803px;top:369px" width="7" height="5" viewBox="0 0 7 5"><path d="M0.8 0.8 L3.5 3.6 L6.2 0.8" fill="none" stroke="#dcdcdc" stroke-width="1.2"/></svg>
<div class="t" style="left:773px;top:366px;font-size:9px;color:#efefef">0</div>
<svg style="left:822px;top:364px" width="13" height="14" viewBox="0 0 13 14"><rect x="0.4" y="0.4" width="12.2" height="8.4" fill="#d0d0d0"/><path d="M1.4 2 L3.6 7.4 L5.8 2 M6.6 7.6 L8.8 2 L11 7.6 M7.6 5.8 H10" fill="none" stroke="#444" stroke-width="0.9"/><path d="M0.6 10 V13.6 M12.4 10 V13.6 M0.6 11.8 H12.4 M0.6 11.8 L2.2 10.6 M0.6 11.8 L2.2 13 M12.4 11.8 L10.8 10.6 M12.4 11.8 L10.8 13" fill="none" stroke="#d6d6d6" stroke-width="0.8"/></svg>
<div class="a" style="left:838px;top:364px;width:9px;height:13px;background:#4a4a4a;border:1px solid #464646;border-radius:1px"></div>
<svg style="left:839.5px;top:365.5px" width="6" height="10" viewBox="0 0 6 10"><path class="chev" d="M0.6 3.4 L3 1 L5.4 3.4 M0.6 6.6 L3 9 L5.4 6.6"/></svg>
<div class="fld" style="left:848px;top:364px;width:30px;height:13px"></div>
<div class="a" style="left:878px;top:364px;width:11px;height:13px;background:#4a4a4a;border:1px solid #464646;border-radius:1px"></div>
<svg style="left:880px;top:369px" width="7" height="5" viewBox="0 0 7 5"><path d="M0.8 0.8 L3.5 3.6 L6.2 0.8" fill="none" stroke="#dcdcdc" stroke-width="1.2"/></svg>
<div class="t" style="left:851px;top:366px;font-size:9px;color:#efefef">0</div>
<div class="a" style="left:883px;top:385px;width:2px;height:2px;background:#c8c8c8;box-shadow:3.5px 0 #c8c8c8,7px 0 #c8c8c8"></div>
<div class="t" style="left:744px;top:403.5px;font-size:6.8px;color:#e4e4e4">段落</div>
<div class="a" style="left:745px;top:421px;width:16px;height:15px;background:#2e2e2e;border-radius:2px"></div>
<svg style="left:748px;top:423px" width="10" height="10" viewBox="0 0 10 10"><rect x="0" y="0" width="10" height="1.3" fill="#d0d0d0"/><rect x="0" y="2" width="8" height="1.3" fill="#d0d0d0"/><rect x="0" y="4" width="10" height="1.3" fill="#d0d0d0"/><rect x="0" y="6" width="8" height="1.3" fill="#d0d0d0"/><rect x="0" y="8" width="10" height="1.3" fill="#d0d0d0"/></svg>
<svg style="left:768.5px;top:423px" width="10" height="10" viewBox="0 0 10 10"><rect x="1" y="0" width="8" height="1.3" fill="#9c9c9c"/><rect x="0" y="2" width="10" height="1.3" fill="#9c9c9c"/><rect x="1" y="4" width="8" height="1.3" fill="#9c9c9c"/><rect x="0" y="6" width="10" height="1.3" fill="#9c9c9c"/><rect x="1" y="8" width="8" height="1.3" fill="#9c9c9c"/></svg>
<svg style="left:789px;top:423px" width="10" height="10" viewBox="0 0 10 10"><rect x="0" y="0" width="10" height="1.3" fill="#9c9c9c"/><rect x="2" y="2" width="8" height="1.3" fill="#9c9c9c"/><rect x="0" y="4" width="10" height="1.3" fill="#9c9c9c"/><rect x="2" y="6" width="8" height="1.3" fill="#9c9c9c"/><rect x="0" y="8" width="10" height="1.3" fill="#9c9c9c"/></svg>
<svg style="left:809.5px;top:423px" width="10" height="10" viewBox="0 0 10 10"><rect x="0" y="0" width="10" height="1.3" fill="#9c9c9c"/><rect x="0" y="2" width="10" height="1.3" fill="#9c9c9c"/><rect x="0" y="4" width="10" height="1.3" fill="#9c9c9c"/><rect x="0" y="6" width="10" height="1.3" fill="#9c9c9c"/><rect x="0" y="8" width="6" height="1.3" fill="#9c9c9c"/></svg>
<svg style="left:830px;top:423px" width="10" height="10" viewBox="0 0 10 10"><rect x="0" y="0" width="10" height="1.3" fill="#9c9c9c"/><rect x="0" y="2" width="10" height="1.3" fill="#9c9c9c"/><rect x="0" y="4" width="10" height="1.3" fill="#9c9c9c"/><rect x="0" y="6" width="10" height="1.3" fill="#9c9c9c"/><rect x="2" y="8" width="6" height="1.3" fill="#9c9c9c"/></svg>
<svg style="left:851px;top:423px" width="10" height="10" viewBox="0 0 10 10"><rect x="0" y="0" width="10" height="1.3" fill="#9c9c9c"/><rect x="0" y="2" width="10" height="1.3" fill="#9c9c9c"/><rect x="0" y="4" width="10" height="1.3" fill="#9c9c9c"/><rect x="0" y="6" width="10" height="1.3" fill="#9c9c9c"/><rect x="4" y="8" width="6" height="1.3" fill="#9c9c9c"/></svg>
<svg style="left:871.5px;top:423px" width="10" height="10" viewBox="0 0 10 10"><rect x="0" y="0" width="10" height="1.3" fill="#9c9c9c"/><rect x="0" y="2" width="10" height="1.3" fill="#9c9c9c"/><rect x="0" y="4" width="10" height="1.3" fill="#9c9c9c"/><rect x="0" y="6" width="10" height="1.3" fill="#9c9c9c"/><rect x="0" y="8" width="10" height="1.3" fill="#9c9c9c"/></svg>
<div class="a" style="left:883px;top:445px;width:2px;height:2px;background:#c8c8c8;box-shadow:3.5px 0 #c8c8c8,7px 0 #c8c8c8"></div>
<div class="t" style="left:744px;top:466px;font-size:6.8px;color:#e4e4e4">クイック操作</div>

<!-- ===== COLOR PANEL ===== -->
<div class="a" style="left:614px;top:57px;width:161px;height:141px;background:#3e3e3e"></div>
<div class="a" style="left:615px;top:58px;width:159px;height:139px;background:#535353"></div>
<div class="a" style="left:615px;top:58px;width:159px;height:26px;background:#424242"></div>
<svg style="left:754px;top:60.5px" width="5" height="4" viewBox="0 0 6 5"><path d="M2.6 0 L0 2.5 L2.6 5Z M5.6 0 L3 2.5 L5.6 5Z" fill="#c8c8c8"/></svg>
<svg style="left:765px;top:60px" width="5.5" height="5.5" viewBox="0 0 6 6"><path d="M0.6 0.6 L5.4 5.4 M5.4 0.6 L0.6 5.4" stroke="#e0e0e0" stroke-width="1.3"/></svg>
<div class="a" style="left:615px;top:66px;width:34px;height:18px;background:#535353"></div>
<div class="a" style="left:650px;top:66px;width:47px;height:18px;background:#4a4a4a"></div>
<svg style="left:618px;top:72px" width="4" height="7" viewBox="0 0 4 7"><path d="M0.4 2.6 L2 0.8 L3.6 2.6 M0.4 4.4 L2 6.2 L3.6 4.4" fill="none" stroke="#bbb" stroke-width="0.8"/></svg>
<div class="t b" style="left:625px;top:70px;font-size:8px;letter-spacing:-2.1px">カラー</div>
<div class="t" style="left:654px;top:70px;font-size:8px;color:#b0b0b0;letter-spacing:-1.75px">カラーガイド</div>
<svg style="left:762.5px;top:73px" width="7" height="6" viewBox="0 0 7 6"><path d="M0 0.5 H7 M0 2.5 H7 M0 4.5 H7" stroke="#a8a8a8" stroke-width="1"/></svg>
<svg style="left:618px;top:88px" width="22" height="10" viewBox="0 0 22 10"><rect x="3.4" y="3.4" width="5" height="5" fill="none" stroke="#1a1a1a" stroke-width="1.6"/><rect x="0.6" y="0.6" width="5.4" height="5.4" fill="#fff" stroke="#e0e0e0" stroke-width="0.6"/><path d="M15.4 3 Q19.6 1.8 19.8 6.4" fill="none" stroke="#d6d6d6" stroke-width="1.3"/><path d="M14 3.2 L16.8 1 L16.8 5.2Z M17.6 5.8 L22 5.8 L19.8 9Z" fill="#d6d6d6"/></svg>
<svg style="left:618px;top:100px" width="21" height="21" viewBox="0 0 21 21"><rect x="0.6" y="0.6" width="12.4" height="12.4" fill="#fff"/><path d="M0.8 12.8 L12.8 0.8" stroke="#e8202a" stroke-width="1.5"/><rect x="7.8" y="7.8" width="12" height="12" fill="#22ac38" stroke="#d6efd9" stroke-width="0.8"/><rect x="11" y="11" width="5.6" height="5.6" fill="#4c4c4c" stroke="#bfe6c4" stroke-width="0.7"/></svg>
<div class="t" style="left:649px;top:92px;font-size:9.5px;color:#cfcfcf">C</div>
<div class="a" style="left:662px;top:95.5px;width:68px;height:2.6px;background:linear-gradient(90deg,#fff100,#e6e833 35%,#7cc242 65%,#22ac38 80%,#22ac38)"></div>
<svg style="left:709.0px;top:98px" width="7" height="6" viewBox="0 0 7 6"><path d="M3.5 0 L6.6 2.8 V5.6 H0.4 V2.8Z" fill="#e4e4e4" stroke="#8a8a8a" stroke-width="0.5"/></svg>
<div class="fld" style="left:735px;top:90.5px;width:23px;height:13px"></div>
<div class="t" style="left:738px;top:92px;font-size:9px;color:#efefef">75</div>
<div class="t" style="left:760px;top:92px;font-size:9px;color:#d8d8d8">%</div>
<div class="t" style="left:649px;top:108.5px;font-size:9.5px;color:#cfcfcf">M</div>
<div class="a" style="left:662px;top:112.0px;width:68px;height:2.6px;background:linear-gradient(90deg,#22ac38,#4f9a36 35%,#7f6a32 65%,#8e3b2a)"></div>
<svg style="left:658.5px;top:114.5px" width="7" height="6" viewBox="0 0 7 6"><path d="M3.5 0 L6.6 2.8 V5.6 H0.4 V2.8Z" fill="#e4e4e4" stroke="#8a8a8a" stroke-width="0.5"/></svg>
<div class="fld" style="left:735px;top:107.0px;width:23px;height:13px"></div>
<div class="t" style="left:738px;top:108.5px;font-size:9px;color:#efefef">0</div>
<div class="t" style="left:760px;top:108.5px;font-size:9px;color:#d8d8d8">%</div>
<div class="t" style="left:649px;top:125px;font-size:9.5px;color:#cfcfcf">Y</div>
<div class="a" style="left:662px;top:128.5px;width:68px;height:2.6px;background:linear-gradient(90deg,#00a0e9,#10a6c8 40%,#1aa970 75%,#22ac38)"></div>
<svg style="left:726.0px;top:131px" width="7" height="6" viewBox="0 0 7 6"><path d="M3.5 0 L6.6 2.8 V5.6 H0.4 V2.8Z" fill="#e4e4e4" stroke="#8a8a8a" stroke-width="0.5"/></svg>
<div class="fld" style="left:735px;top:123.5px;width:23px;height:13px"></div>
<div class="t" style="left:738px;top:125px;font-size:9px;color:#efefef">100</div>
<div class="t" style="left:760px;top:125px;font-size:9px;color:#d8d8d8">%</div>
<div class="t" style="left:649px;top:141.5px;font-size:9.5px;color:#cfcfcf">K</div>
<div class="a" style="left:662px;top:145.0px;width:68px;height:2.6px;background:linear-gradient(90deg,#22ac38,#1f7a2c 50%,#1c4a20 80%,#0a0a0a 95%,#000)"></div>
<svg style="left:658.5px;top:147.5px" width="7" height="6" viewBox="0 0 7 6"><path d="M3.5 0 L6.6 2.8 V5.6 H0.4 V2.8Z" fill="#e4e4e4" stroke="#8a8a8a" stroke-width="0.5"/></svg>
<div class="fld" style="left:735px;top:140.0px;width:23px;height:13px"></div>
<div class="t" style="left:738px;top:141.5px;font-size:9px;color:#efefef">0</div>
<div class="t" style="left:760px;top:141.5px;font-size:9px;color:#d8d8d8">%</div>
<div class="a" style="left:662px;top:177px;width:100px;height:14px;background:linear-gradient(180deg,#fff,rgba(255,255,255,0) 45%,rgba(0,0,0,0) 55%,#000),linear-gradient(90deg,#e60012,#f39800 10%,#fff100 20%,#22ac38 32%,#00a0e9 44%,#3434b0 56%,#8a3cc0 70%,#e840a0 84%,#f01030 96%,#e60012)"></div>

<!-- ===== APPEARANCE PANEL ===== -->
<div class="a" style="left:556px;top:138px;width:162px;height:186px;background:#3c3c3c;border-radius:2px 2px 0 0"></div>
<div class="a" style="left:557px;top:139px;width:160px;height:184px;background:#535353"></div>
<div class="a" style="left:557px;top:139px;width:160px;height:26px;background:#424242"></div>
<svg style="left:696px;top:140.5px" width="6" height="5" viewBox="0 0 6 5"><path d="M2.6 0 L0 2.5 L2.6 5Z M5.6 0 L3 2.5 L5.6 5Z" fill="#c8c8c8"/></svg>
<svg style="left:708px;top:140.5px" width="6" height="6" viewBox="0 0 6 6"><path d="M0.6 0.6 L5.4 5.4 M5.4 0.6 L0.6 5.4" stroke="#e0e0e0" stroke-width="1.3"/></svg>
<div class="a" style="left:557px;top:147px;width:46px;height:18px;background:#535353"></div>
<div class="t" style="left:563px;top:151px;font-size:8px;letter-spacing:-2.2px;color:#ececec">アピアランス</div>
<svg style="left:706px;top:153.5px" width="7" height="6" viewBox="0 0 7 6"><path d="M0 0.5 H7 M0 2.5 H7 M0 4.5 H7" stroke="#a8a8a8" stroke-width="1"/></svg>
<div class="a" style="left:560px;top:167px;width:153px;height:137px;background:#525252;border:1px solid #494949"></div>
<div class="a" style="left:560px;top:185px;width:153px;height:1px;background:#484848"></div>
<div class="a" style="left:560px;top:202px;width:153px;height:1px;background:#484848"></div>
<div class="a" style="left:560px;top:218px;width:153px;height:1px;background:#484848"></div>
<div class="a" style="left:560px;top:235px;width:153px;height:1px;background:#484848"></div>
<div class="a" style="left:560px;top:251px;width:153px;height:1px;background:#484848"></div>
<div class="a" style="left:560px;top:268px;width:153px;height:1px;background:#484848"></div>
<div class="a" style="left:560px;top:284px;width:153px;height:1px;background:#484848"></div>
<div class="a" style="left:577px;top:186px;width:1px;height:32px;background:#464646"></div>
<div class="a" style="left:577px;top:252px;width:1px;height:32px;background:#464646"></div>
<svg style="left:562px;top:171px" width="13" height="13" viewBox="0 0 13 13"><rect x="0.5" y="0.5" width="12" height="12" rx="1" fill="#7fcf8a"/><rect x="2.4" y="2.4" width="8.2" height="8.2" fill="#fff"/></svg>
<div class="t b" style="left:594px;top:173px;font-size:8.3px">テキスト</div>
<svg style="left:563px;top:191px" width="10" height="6" viewBox="0 0 10 6"><path d="M0.3 3 Q5 -2.4 9.7 3 Q5 8.4 0.3 3Z" fill="#c4c4c4"/><circle cx="5" cy="3" r="1.8" fill="#535353"/><circle cx="5" cy="3" r="0.9" fill="#c4c4c4"/></svg>
<svg style="left:581px;top:192px" width="7" height="5" viewBox="0 0 7 5"><path d="M0.8 0.8 L3.5 3.6 L6.2 0.8" fill="none" stroke="#cfcfcf" stroke-width="1.2"/></svg>
<div class="t b" style="left:594px;top:190px;font-size:8.3px">塗り :</div>
<svg style="left:638px;top:188px" width="13" height="13" viewBox="0 0 13 13"><rect x="0.5" y="0.5" width="12" height="12" rx="1.5" fill="#3e3e3e" stroke="#8c8c8c" stroke-width="0.8"/><rect x="2.2" y="2.2" width="8.6" height="8.6" fill="#fff"/><path d="M2.6 10.4 L10.4 2.6" stroke="#e8202a" stroke-width="1.4"/></svg>
<svg style="left:563px;top:207.5px" width="10" height="6" viewBox="0 0 10 6"><path d="M0.3 3 Q5 -2.4 9.7 3 Q5 8.4 0.3 3Z" fill="#686868"/><circle cx="5" cy="3" r="1.5" fill="#535353"/></svg>
<div class="t b u" style="left:609px;top:206.5px;font-size:8.3px">不透明度 :</div>
<div class="t b" style="left:665px;top:206.5px;font-size:8px;letter-spacing:-.3px;font-weight:500;color:#e6e6e6">初期設定</div>
<div class="t b" style="left:594px;top:223px;font-size:8.3px">文字</div>
<div class="a" style="left:560px;top:236px;width:153px;height:15px;background:#4b6079"></div>
<div class="a" style="left:577px;top:236px;width:1px;height:15px;background:#435469"></div>
<svg style="left:563px;top:240.5px" width="10" height="6" viewBox="0 0 10 6"><path d="M0.3 3 Q5 -2.4 9.7 3 Q5 8.4 0.3 3Z" fill="#d4d4d4"/><circle cx="5" cy="3" r="1.8" fill="#4b6079"/><circle cx="5" cy="3" r="0.9" fill="#d4d4d4"/></svg>
<svg style="left:581px;top:241.5px" width="7" height="5" viewBox="0 0 7 5"><path d="M0.8 0.8 L3.5 3.6 L6.2 0.8" fill="none" stroke="#e0e0e0" stroke-width="1.2"/></svg>
<div class="t b u" style="left:594px;top:239.5px;font-size:8.3px">線 :</div>
<svg style="left:637px;top:237px" width="13" height="13" viewBox="0 0 13 13"><rect x="0.5" y="0.5" width="12" height="12" fill="#22ac38" stroke="#cfe9d2" stroke-width="0.8"/><rect x="4.2" y="4.2" width="4.6" height="4.6" fill="#a5dcad"/><rect x="5.5" y="5.5" width="2" height="2" fill="#2f4a33"/></svg>
<div class="a" style="left:651px;top:237px;width:11px;height:13px;background:#4a4a4a;border:1px solid #464646;border-radius:1px"></div>
<svg style="left:653px;top:241.5px" width="7" height="5" viewBox="0 0 7 5"><path d="M0.8 0.8 L3.5 3.6 L6.2 0.8" fill="none" stroke="#dcdcdc" stroke-width="1.2"/></svg>
<div class="a" style="left:666px;top:237px;width:9px;height:13px;background:#4a4a4a;border:1px solid #464646;border-radius:1px"></div>
<svg style="left:667.5px;top:238.5px" width="6" height="10" viewBox="0 0 6 10"><path class="chev" d="M0.6 3.4 L3 1 L5.4 3.4 M0.6 6.6 L3 9 L5.4 6.6"/></svg>
<div class="fld" style="left:676px;top:237px;width:25px;height:13px"></div>
<div class="a" style="left:702px;top:237px;width:11px;height:13px;background:#4a4a4a;border:1px solid #464646;border-radius:1px"></div>
<svg style="left:704px;top:241.5px" width="7" height="5" viewBox="0 0 7 5"><path d="M0.8 0.8 L3.5 3.6 L6.2 0.8" fill="none" stroke="#dcdcdc" stroke-width="1.2"/></svg>
<div class="t" style="left:678px;top:239px;font-size:9px;color:#efefef">5 pt</div>
<svg style="left:563px;top:256.5px" width="10" height="6" viewBox="0 0 10 6"><path d="M0.3 3 Q5 -2.4 9.7 3 Q5 8.4 0.3 3Z" fill="#686868"/><circle cx="5" cy="3" r="1.5" fill="#535353"/></svg>
<div class="t b u" style="left:609px;top:256px;font-size:8.3px">不透明度 :</div>
<div class="t b" style="left:665px;top:256px;font-size:8px;letter-spacing:-.3px;font-weight:500;color:#e6e6e6">初期設定</div>
<svg style="left:563px;top:273px" width="10" height="6" viewBox="0 0 10 6"><path d="M0.3 3 Q5 -2.4 9.7 3 Q5 8.4 0.3 3Z" fill="#686868"/><circle cx="5" cy="3" r="1.5" fill="#535353"/></svg>
<div class="t b u" style="left:594px;top:272.5px;font-size:8.3px">不透明度 :</div>
<div class="t b" style="left:650px;top:272.5px;font-size:8px;letter-spacing:-.3px;font-weight:500;color:#e6e6e6">初期設定</div>
<svg style="left:564px;top:308px" width="8" height="8" viewBox="0 0 8 8"><rect x="0.8" y="0.8" width="6.4" height="6.4" fill="none" stroke="#e6e6e6" stroke-width="1.3"/></svg>
<div class="a" style="left:577px;top:305px;width:14px;height:14px;background:#6e6e6e"></div>
<svg style="left:580px;top:308px" width="8" height="8" viewBox="0 0 8 8"><rect x="0.5" y="0.5" width="7" height="7" fill="#f4f4f4" stroke="#cfcfcf" stroke-width="0.8"/></svg>
<div class="t" style="left:598px;top:306px;font-size:10px;font-style:italic;font-family:'Liberation Serif',serif;color:#e0e0e0">fx.</div>
<svg style="left:654px;top:308px" width="8" height="8" viewBox="0 0 8 8"><circle cx="4" cy="4" r="3.2" fill="none" stroke="#dcdcdc" stroke-width="1.1"/><path d="M1.8 1.8 L6.2 6.2" stroke="#dcdcdc" stroke-width="1.1"/></svg>
<svg style="left:674px;top:308.5px" width="6.5" height="6.5" viewBox="0 0 8 8"><path d="M0.4 0.4 H7.6 V5.2 L5.2 7.6 H0.4Z" fill="#dcdcdc"/><path d="M5 7.6 V5 H7.6" fill="none" stroke="#535353" stroke-width="0.8"/></svg>
<svg style="left:689px;top:307px" width="8" height="9" viewBox="0 0 8 9"><path d="M0.4 1.8 H7.6 M2.8 1.6 V0.5 H5.2 V1.6 M1.2 2.2 L1.6 8.5 H6.4 L6.8 2.2" fill="none" stroke="#b4b4b4" stroke-width="1"/><path d="M3 3.4 V7.4 M5 3.4 V7.4" stroke="#b4b4b4" stroke-width="0.7"/></svg>
<div class="a" style="left:557px;top:319.5px;width:160px;height:4px;background:#3e3e3e"></div>
<div class="a" style="left:631px;top:321px;width:11px;height:1px;background:repeating-linear-gradient(90deg,#6a6a6a 0 1px,#3e3e3e 1px 2px)"></div>

</body>
</html>
